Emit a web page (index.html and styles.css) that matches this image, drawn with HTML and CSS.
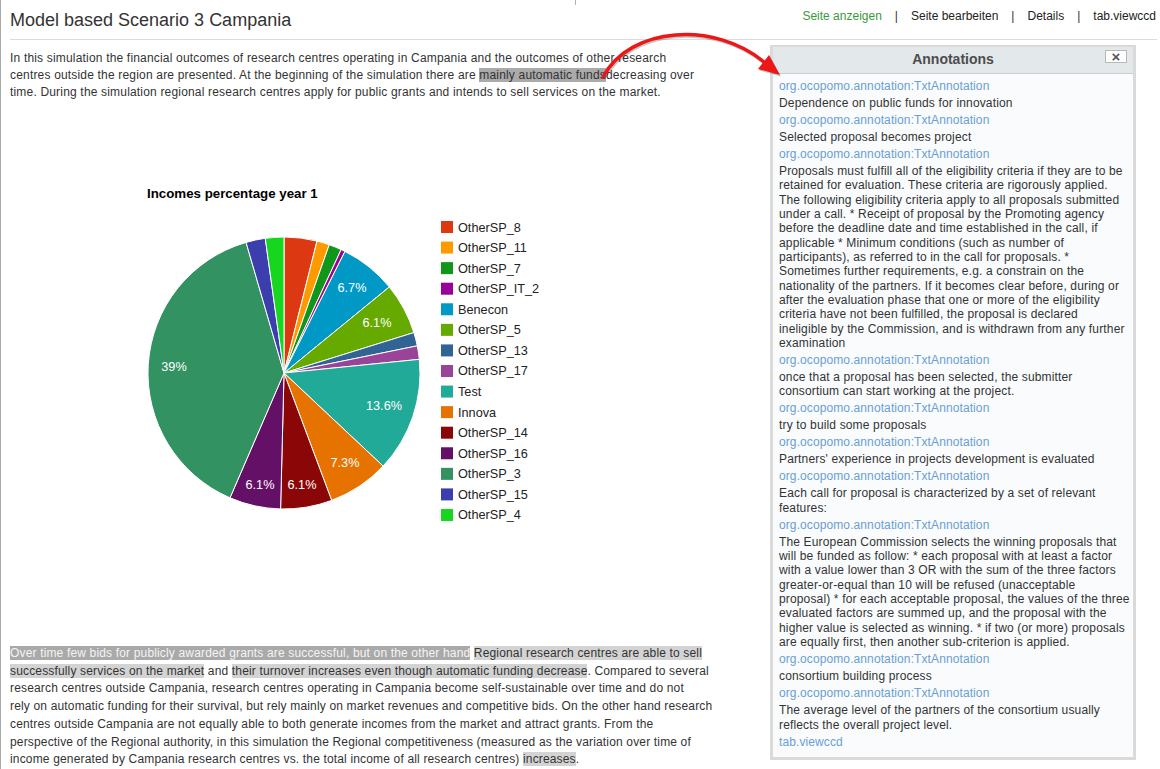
FILE: index.html
```html
<!DOCTYPE html>
<html lang="en">
<head>
<meta charset="utf-8">
<title>Model based Scenario 3 Campania</title>
<link rel="stylesheet" href="styles.css">
</head>
<body>
<svg class="overlay" width="800" height="100" viewBox="0 0 800 100">
  <line x1="575.5" y1="0" x2="575.5" y2="5" stroke="#b0b0b0" stroke-width="1"/>
  <path d="M603,77 C630,26 715,21 764,62" fill="none" stroke="rgba(0,0,0,0.22)" stroke-width="3.5" transform="translate(1,1.5)"/>
  <polygon points="781,76.5 759,70.5 770,56.5" fill="rgba(0,0,0,0.22)"/>
  <path d="M603,77 C630,26 715,21 764,62" fill="none" stroke="#ec1818" stroke-width="3.5" stroke-linecap="round"/>
  <polygon points="780,75 758,69 769,55" fill="#ec1818"/>
</svg>

<header class="topbar">
  <h1 class="title">Model based Scenario 3 Campania</h1>
  <nav class="actions">
    <a class="act current" href="#">Seite anzeigen</a><span class="sep">|</span>
    <a class="act" href="#">Seite bearbeiten</a><span class="sep">|</span>
    <a class="act" href="#">Details</a><span class="sep">|</span>
    <a class="act" href="#">tab.viewccd</a>
  </nav>
</header>

<div class="main">
  <div class="content">
    <p class="intro">In this simulation the financial outcomes of research centres operating in Campania and the outcomes of other research<br>centres outside the region are presented. At the beginning of the simulation there are <span class="hl-mid">mainly automatic funds</span>decreasing over<br>time. During the simulation regional research centres apply for public grants and intends to sell services on the market.</p>

    <div class="chart">
      <svg width="700" height="544" viewBox="0 0 700 544">
        <g transform="translate(0,59)">
          <text class="chart-title" x="137" y="37.7">Incomes percentage year 1</text>
          <g class="slices">
            <path fill="#dc3912" d="M274,213 L274,77 A136,136 0 0 1 307,81.07 Z"/>
            <path fill="#ff9900" d="M274,213 L307,81.07 A136,136 0 0 1 319.26,84.75 Z"/>
            <path fill="#109618" d="M274,213 L319.26,84.75 A136,136 0 0 1 331.13,89.58 Z"/>
            <path fill="#990099" d="M274,213 L331.13,89.58 A136,136 0 0 1 334.97,91.43 Z"/>
            <path fill="#0099c6" d="M274,213 L334.97,91.43 A136,136 0 0 1 379.32,126.95 Z"/>
            <path fill="#66aa00" d="M274,213 L379.32,126.95 A136,136 0 0 1 403.87,172.59 Z"/>
            <path fill="#316395" d="M274,213 L403.87,172.59 A136,136 0 0 1 407.27,185.84 Z"/>
            <path fill="#994499" d="M274,213 L407.27,185.84 A136,136 0 0 1 409.32,199.35 Z"/>
            <path fill="#22aa99" d="M274,213 L409.32,199.35 A136,136 0 0 1 373.14,306.09 Z"/>
            <path fill="#e67300" d="M274,213 L373.14,306.09 A136,136 0 0 1 321.67,340.38 Z"/>
            <path fill="#8b0707" d="M274,213 L321.67,340.38 A136,136 0 0 1 270.58,348.96 Z"/>
            <path fill="#651067" d="M274,213 L270.58,348.96 A136,136 0 0 1 219.99,337.82 Z"/>
            <path fill="#329262" d="M274,213 L219.99,337.82 A136,136 0 0 1 236.06,82.4 Z"/>
            <path fill="#3b3eac" d="M274,213 L236.06,82.4 A136,136 0 0 1 255.26,78.29 Z"/>
            <path fill="#16d620" d="M274,213 L255.26,78.29 A136,136 0 0 1 274,77 Z"/>
          </g>
          <g class="slice-labels">
            <text x="342" y="132.4">6.7%</text>
            <text x="367" y="167.4">6.1%</text>
            <text x="164" y="211.2">39%</text>
            <text x="374" y="250.4">13.6%</text>
            <text x="335" y="307.4">7.3%</text>
            <text x="292" y="329.4">6.1%</text>
            <text x="250" y="329.4">6.1%</text>
          </g>
          <g class="legend">
            <rect x="431" y="61" width="12" height="12" fill="#dc3912"/><text x="448" y="71.5">OtherSP_8</text>
            <rect x="431" y="81.57" width="12" height="12" fill="#ff9900"/><text x="448" y="92.07">OtherSP_11</text>
            <rect x="431" y="102.14" width="12" height="12" fill="#109618"/><text x="448" y="112.64">OtherSP_7</text>
            <rect x="431" y="122.71" width="12" height="12" fill="#990099"/><text x="448" y="133.21">OtherSP_IT_2</text>
            <rect x="431" y="143.28" width="12" height="12" fill="#0099c6"/><text x="448" y="153.78">Benecon</text>
            <rect x="431" y="163.85" width="12" height="12" fill="#66aa00"/><text x="448" y="174.35">OtherSP_5</text>
            <rect x="431" y="184.42" width="12" height="12" fill="#316395"/><text x="448" y="194.92">OtherSP_13</text>
            <rect x="431" y="204.99" width="12" height="12" fill="#994499"/><text x="448" y="215.49">OtherSP_17</text>
            <rect x="431" y="225.56" width="12" height="12" fill="#22aa99"/><text x="448" y="236.06">Test</text>
            <rect x="431" y="246.13" width="12" height="12" fill="#e67300"/><text x="448" y="256.63">Innova</text>
            <rect x="431" y="266.7" width="12" height="12" fill="#8b0707"/><text x="448" y="277.2">OtherSP_14</text>
            <rect x="431" y="287.27" width="12" height="12" fill="#651067"/><text x="448" y="297.77">OtherSP_16</text>
            <rect x="431" y="307.84" width="12" height="12" fill="#329262"/><text x="448" y="318.34">OtherSP_3</text>
            <rect x="431" y="328.41" width="12" height="12" fill="#3b3eac"/><text x="448" y="338.91">OtherSP_15</text>
            <rect x="431" y="348.98" width="12" height="12" fill="#16d620"/><text x="448" y="359.48">OtherSP_4</text>
          </g>
        </g>
      </svg>
    </div>

    <p class="outro"><span class="hl-dark">Over time few bids for publicly awarded grants are successful, but on the other hand</span> <span class="hl-light">Regional research centres are able to sell<br>successfully services on the market</span> and <span class="hl-light">their turnover increases even though automatic funding decrease</span>. Compared to several<br>research centres outside Campania, research centres operating in Campania become self-sustainable over time and do not<br>rely on automatic funding for their survival, but rely mainly on market revenues and competitive bids. On the other hand research<br>centres outside Campania are not equally able to both generate incomes from the market and attract grants. From the<br>perspective of the Regional authority, in this simulation the Regional competitiveness (measured as the variation over time of<br>income generated by Campania research centres vs. the total income of all research centres) <span class="hl-light">increases</span>.</p>
  </div>

  <aside class="annotations">
    <div class="ann-head">Annotations<button class="ann-close" type="button">×</button></div>
    <div class="ann-body">
      <a class="ann-link" href="#">org.ocopomo.annotation:TxtAnnotation</a>
      <div class="ann-text">Dependence on public funds for innovation</div>
      <a class="ann-link" href="#">org.ocopomo.annotation:TxtAnnotation</a>
      <div class="ann-text">Selected proposal becomes project</div>
      <a class="ann-link" href="#">org.ocopomo.annotation:TxtAnnotation</a>
      <div class="ann-text">Proposals must fulfill all of the eligibility criteria if they are to be<br>retained for evaluation. These criteria are rigorously applied.<br>The following eligibility criteria apply to all proposals submitted<br>under a call. * Receipt of proposal by the Promoting agency<br>before the deadline date and time established in the call, if<br>applicable * Minimum conditions (such as number of<br>participants), as referred to in the call for proposals. *<br>Sometimes further requirements, e.g. a constrain on the<br>nationality of the partners. If it becomes clear before, during or<br>after the evaluation phase that one or more of the eligibility<br>criteria have not been fulfilled, the proposal is declared<br>ineligible by the Commission, and is withdrawn from any further<br>examination</div>
      <a class="ann-link" href="#">org.ocopomo.annotation:TxtAnnotation</a>
      <div class="ann-text">once that a proposal has been selected, the submitter<br>consortium can start working at the project.</div>
      <a class="ann-link" href="#">org.ocopomo.annotation:TxtAnnotation</a>
      <div class="ann-text">try to build some proposals</div>
      <a class="ann-link" href="#">org.ocopomo.annotation:TxtAnnotation</a>
      <div class="ann-text">Partners' experience in projects development is evaluated</div>
      <a class="ann-link" href="#">org.ocopomo.annotation:TxtAnnotation</a>
      <div class="ann-text">Each call for proposal is characterized by a set of relevant<br>features:</div>
      <a class="ann-link" href="#">org.ocopomo.annotation:TxtAnnotation</a>
      <div class="ann-text">The European Commission selects the winning proposals that<br>will be funded as follow: * each proposal with at least a factor<br>with a value lower than 3 OR with the sum of the three factors<br>greater-or-equal than 10 will be refused (unacceptable<br>proposal) * for each acceptable proposal, the values of the three<br>evaluated factors are summed up, and the proposal with the<br>higher value is selected as winning. * if two (or more) proposals<br>are equally first, then another sub-criterion is applied.</div>
      <a class="ann-link" href="#">org.ocopomo.annotation:TxtAnnotation</a>
      <div class="ann-text">consortium building process</div>
      <a class="ann-link" href="#">org.ocopomo.annotation:TxtAnnotation</a>
      <div class="ann-text">The average level of the partners of the consortium usually<br>reflects the overall project level.</div>
      <a class="ann-link ann-foot" href="#">tab.viewccd</a>
    </div>
  </aside>
</div>
</body>
</html>
```

FILE: styles.css
```css
html, body {
  background: #ffffff;
}

body {
  margin: 0;
  position: relative;
  min-height: 100vh;
  box-sizing: border-box;
  border-left: 1px solid #a9a9a9;
  font-family: "Liberation Sans", Arial, sans-serif;
  font-size: 12px;
  color: #333333;
}

.overlay {
  position: absolute;
  top: 0;
  left: -1px;
  z-index: 10;
  pointer-events: none;
}

.topbar {
  display: flex;
  justify-content: space-between;
  align-items: flex-start;
  height: 30px;
  margin: 0 3px 0 9px;
  padding: 9px 1px 0 0;
  border-bottom: 1px solid #dcdcdc;
}

.title {
  margin: 0;
  font-size: 18px;
  font-weight: normal;
  line-height: 22px;
  color: #333333;
}

.actions {
  display: flex;
  font-size: 12px;
  line-height: 14px;
}

.act {
  color: #222222;
  text-decoration: none;
}

.act.current {
  color: #3a9a3a;
}

.sep {
  margin: 0 13px;
  color: #333333;
}

.main {
  display: flex;
  align-items: flex-start;
  padding-left: 9px;
}

.content {
  flex: none;
  width: 700px;
}

.intro {
  margin: 10px 0 0;
  line-height: 17px;
  letter-spacing: 0.18px;
  white-space: nowrap;
}

.chart {
  height: 544px;
}

.chart svg {
  display: block;
}

.chart-title {
  font-family: "Liberation Sans", Arial, sans-serif;
  font-size: 13.3px;
  font-weight: bold;
  fill: #000000;
}

.slices path {
  stroke: #ffffff;
  stroke-width: 1;
}

.slice-labels text {
  font-family: "Liberation Sans", Arial, sans-serif;
  font-size: 12.7px;
  fill: #ffffff;
  text-anchor: middle;
}

.legend text {
  font-family: "Liberation Sans", Arial, sans-serif;
  font-size: 12.7px;
  fill: #222222;
}

.outro {
  margin: 0;
  line-height: 17.7px;
  letter-spacing: 0.16px;
  white-space: nowrap;
}

.hl-mid {
  background: #aaaaaa;
}

.hl-dark {
  background: #a9a9a9;
  color: #f4f4f4;
}

.hl-light {
  background: #d3d3d3;
}

.annotations {
  flex: none;
  width: 360px;
  margin: 5px 0 0 60px;
  border: 3px solid #dadada;
  border-top-width: 2px;
  background: #f9fbfd;
}

.ann-head {
  position: relative;
  height: 26px;
  line-height: 24px;
  text-align: center;
  font-size: 14px;
  font-weight: bold;
  color: #4d4d4d;
  background: #e3e8ea;
  border-bottom: 1px solid #c9ced1;
}

.ann-close {
  position: absolute;
  top: 3px;
  right: 6px;
  box-sizing: border-box;
  width: 22px;
  height: 13px;
  padding: 0;
  border: 1px solid #b8b8b8;
  background: #ffffff;
  font-family: "Liberation Sans", Arial, sans-serif;
  font-size: 15px;
  font-weight: bold;
  line-height: 10px;
  color: #555555;
}

.ann-body {
  padding: 5px 4px 8px 6px;
  line-height: 14.33px;
  letter-spacing: 0.15px;
}

.ann-link {
  display: block;
  margin-bottom: 2.7px;
  color: #6a9fd3;
  text-decoration: none;
  letter-spacing: 0.1px;
}

.ann-text {
  margin-bottom: 2.7px;
  color: #333333;
  white-space: nowrap;
}

.ann-foot {
  margin-top: 2px;
  margin-bottom: 0;
}
```
